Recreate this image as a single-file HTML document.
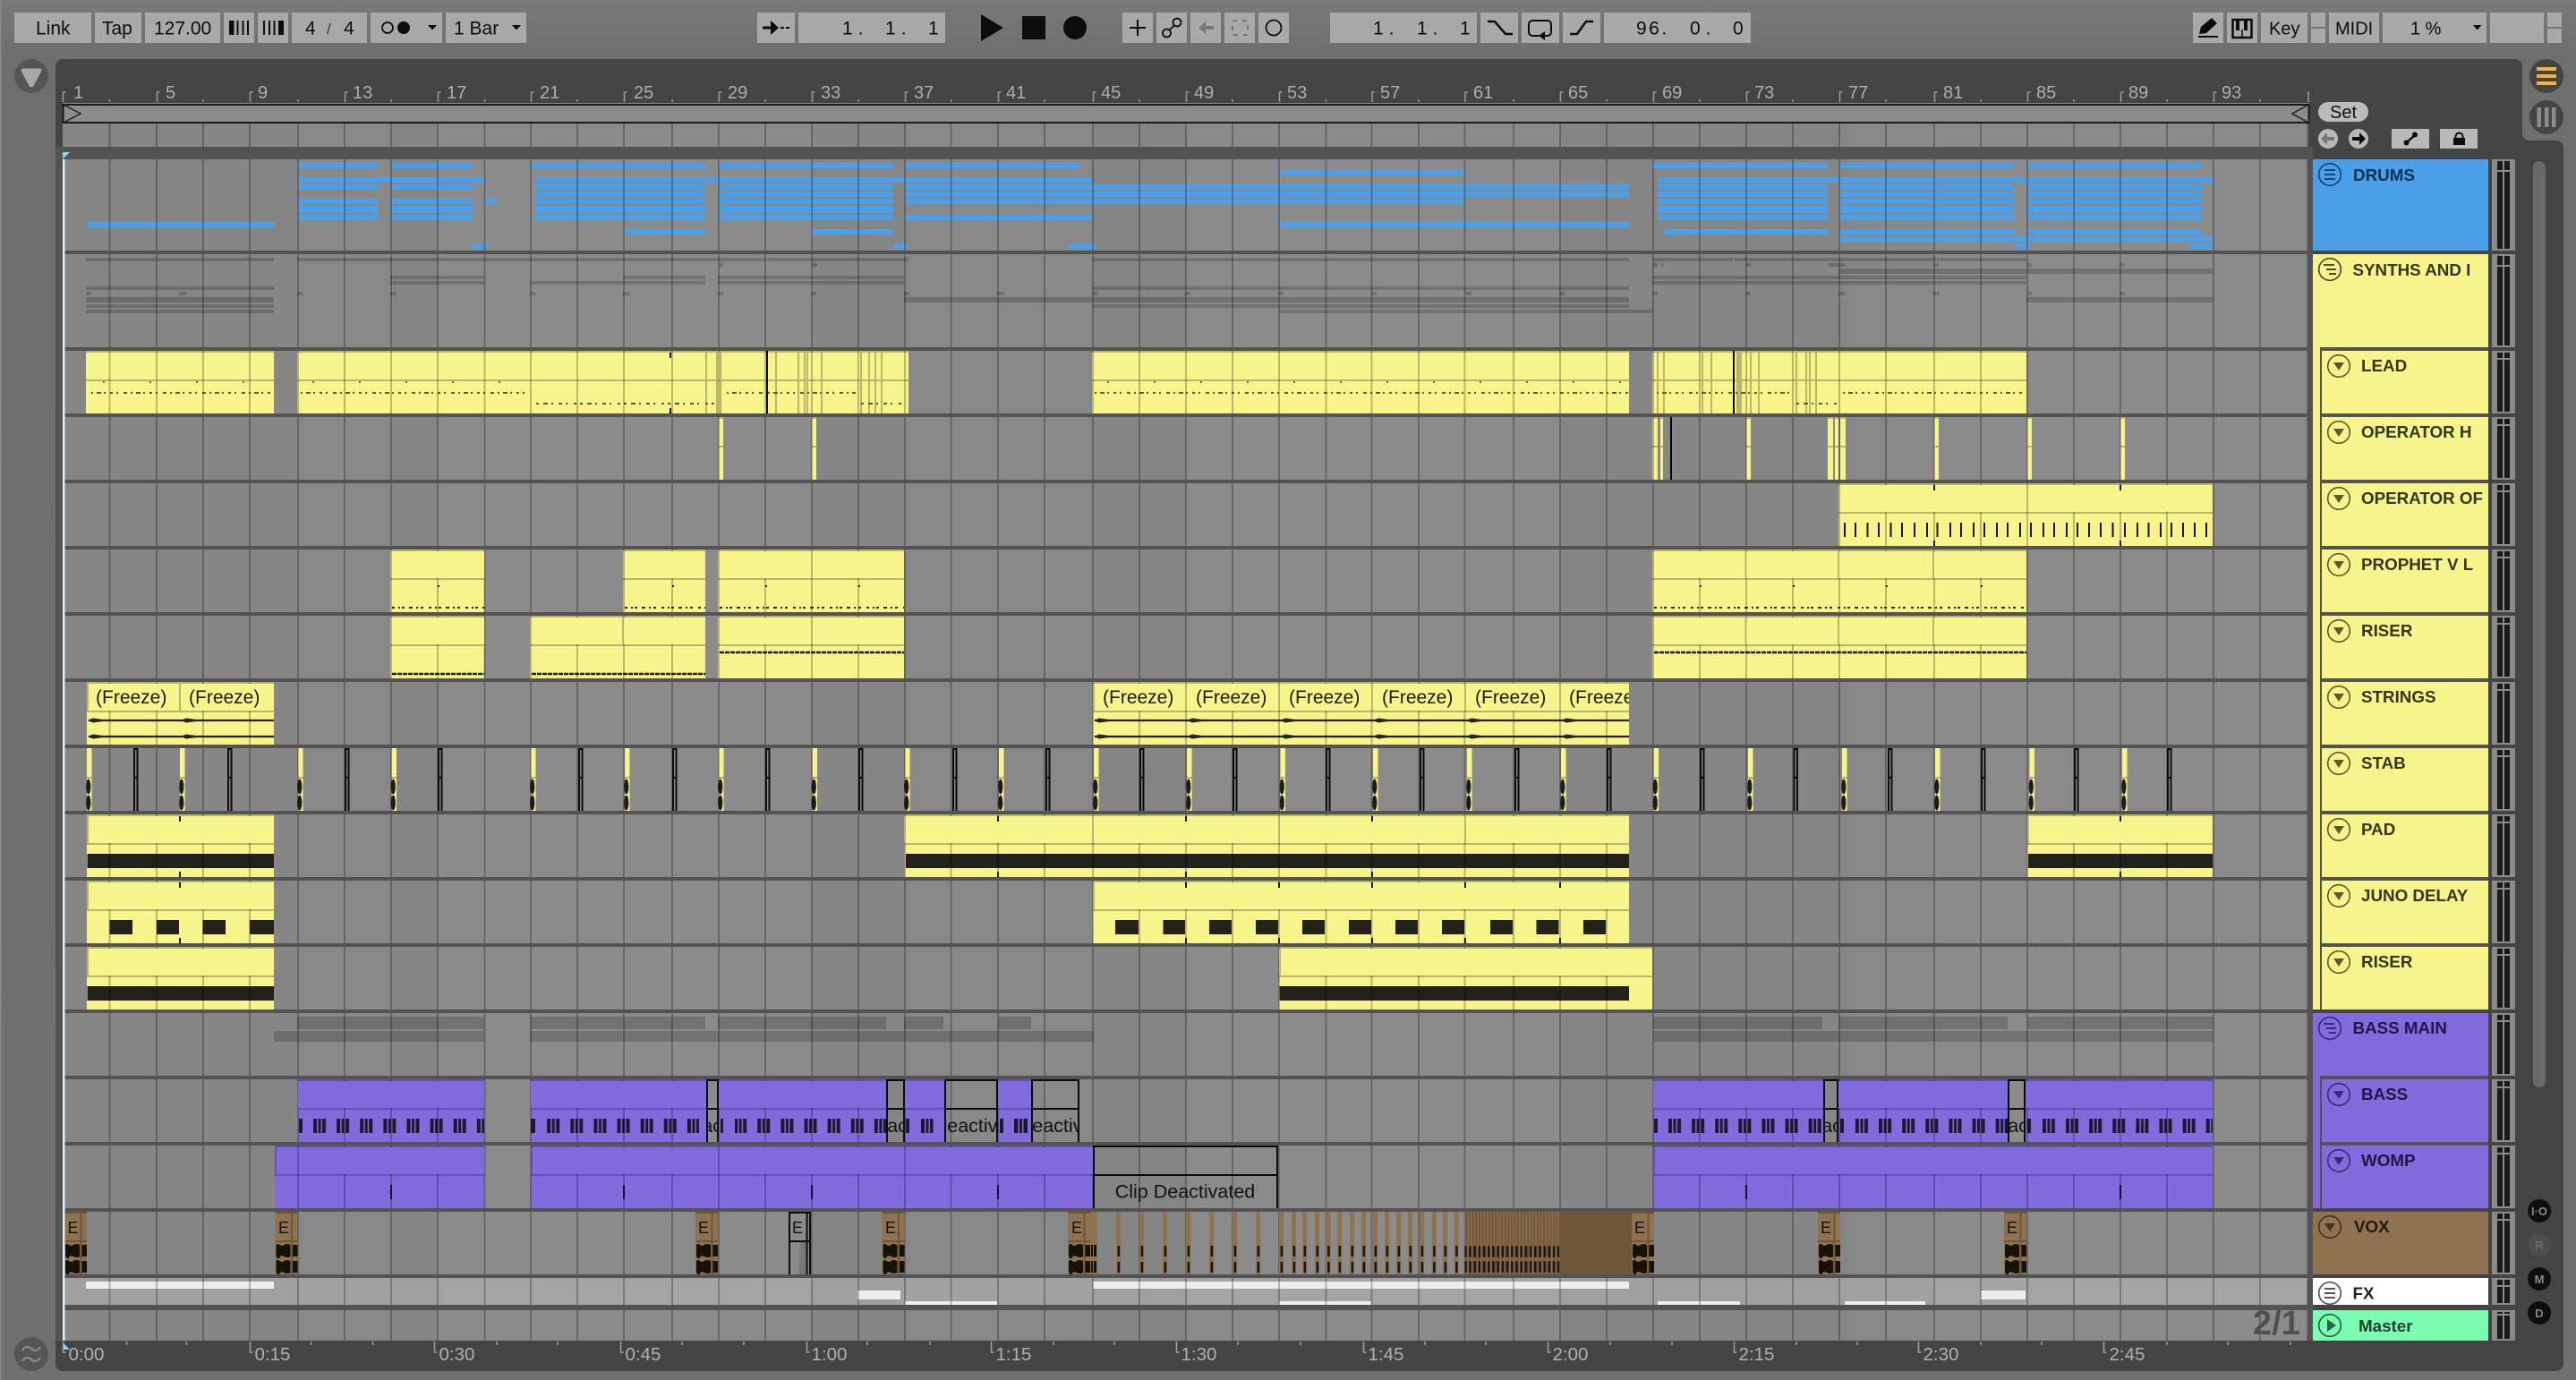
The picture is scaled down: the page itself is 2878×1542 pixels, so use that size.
<!DOCTYPE html>
<html lang="en">
<head>
<meta charset="utf-8">
<title>Arrangement View</title>
<style>
html,body{margin:0;padding:0;background:#707070;width:2878px;height:1542px;overflow:hidden}
svg{display:block}
text{font-family:"Liberation Sans",sans-serif}
.tb{font-size:21px;fill:#0c0c0c}
.ls{letter-spacing:6px}
.ls2{letter-spacing:2.5px}
.rl{font-size:20px;fill:#adadad}
.tl{font-size:20.5px;fill:#b0b0b0}
.nm{font-size:18.8px;font-weight:700}
.fz{font-size:21px;fill:#1a1a10}
.cd{font-size:21.5px;fill:#111}
.e{font-size:18px;fill:#111}
.sm{font-size:13px;font-weight:700;fill:#8a8a8a;text-anchor:middle}
</style>
</head>
<body>
<svg xmlns="http://www.w3.org/2000/svg" width="2878" height="1542" viewBox="0 0 2878 1542">
<defs>
<linearGradient id="bgg" x1="0" y1="0" x2="0" y2="1"><stop offset="0" stop-color="#7a7a7a"/><stop offset=".04" stop-color="#6e6e6e"/><stop offset="1" stop-color="#707070"/></linearGradient>
<pattern id="py" patternUnits="userSpaceOnUse" x="0" y="392" width="10" height="74"><rect width="10" height="70" fill="#f8f48c"/><rect width="10" height="2" fill="#b8b66a"/><rect y="32" width="10" height="2" fill="#b8b66a"/></pattern>
<pattern id="pp" patternUnits="userSpaceOnUse" x="0" y="392" width="10" height="74"><rect width="10" height="70" fill="#826bdc"/><rect width="10" height="2" fill="#6650b8"/><rect y="32" width="10" height="2" fill="#6650b8"/></pattern>
<pattern id="bn1" patternUnits="userSpaceOnUse" x="350" y="1250" width="26.12" height="16"><path fill="#1f1830" d="M0 0h4v16h-4zM5.5 0h3v16h-3zM10 0h4v16h-4z"/></pattern>
<pattern id="bn2" patternUnits="userSpaceOnUse" x="1864" y="1250" width="26.12" height="16"><path fill="#1f1830" d="M0 0h4v16h-4zM5.5 0h3v16h-3zM10 0h4v16h-4z"/></pattern>
<pattern id="dn" patternUnits="userSpaceOnUse" x="1636" y="1354" width="3.6" height="32"><rect width="1.6" height="32" fill="#947856"/></pattern>
<pattern id="dw" patternUnits="userSpaceOnUse" x="1636" y="1388" width="5.2" height="36"><rect x="0" y="4" width="2.6" height="13" rx="1.3" fill="#1c1710"/><rect x="0" y="21" width="2.6" height="13" rx="1.3" fill="#1c1710"/></pattern>
<path id="m" d="M2793 2V8M2801 2V8M2793 10V68M2801 10V68" fill="none" stroke="#1a1a1a" stroke-width="6"/>
<g id="tri"><circle cx="2613" cy="17" r="12.3" fill="none" stroke="currentColor" stroke-width="1.6"/><path d="M2607 13H2619L2613 22Z" fill="currentColor"/></g>
<g id="sy"><rect width="5.5" y="836" height="70" fill="#f8f48c"/><rect width="5.5" y="868" height="2" fill="#b8b66a"/><ellipse cx="1.8" cy="879" rx="2.6" ry="8.5" fill="#1c1c14"/><ellipse cx="1.8" cy="897" rx="2.6" ry="8.5" fill="#1c1c14"/></g>
<path id="sb" d="M1 836V906M4.5 836V906M0 869H5.5M0 837H5.5" fill="none" stroke="#0a0a0a" stroke-width="2"/>
<g id="vc"><rect width="25" y="1354" height="70" fill="#8f7250"/><path d="M0 1355H25M0 1387H25M18.5 1354V1424" stroke="#6f5638" stroke-width="2" fill="none"/><path d="M1 1391q2-2 4 0t5 0 7 0v13q-3 2-7 0t-5 1-4-1zM19.5 1391h5.5v13h-5.5zM1 1409q2-2 4 0t5 0 7 0v13q-3 2-7 0t-5 1-4-1zM19.5 1409h5.5v13h-5.5z" fill="#151209"/></g>
<g id="vt"><rect width="5.2" y="1354" height="70" fill="#8f7250"/><rect x="1.6" width="2.6" y="1392" height="12" fill="#1a1712"/><rect x="1.6" width="2.6" y="1410" height="12" fill="#1a1712"/></g>
</defs>

<rect width="2878" height="1542" fill="url(#bgg)"/>
<rect width="1.5" height="1542" fill="#8a8a8a"/>

<!-- Toolbar -->
<g fill="#a9a9a9">
<rect x="16" y="14" width="86" height="34"/><rect x="106" y="14" width="52" height="34"/><rect x="162" y="14" width="84" height="34"/><rect x="250" y="14" width="34" height="34"/><rect x="288" y="14" width="34" height="34"/><rect x="326" y="14" width="84" height="34"/><rect x="414" y="14" width="80" height="34"/><rect x="498" y="14" width="90" height="34"/>
<rect x="846" y="14" width="42" height="34"/><rect x="892" y="14" width="164" height="34"/>
<rect x="1254" y="14" width="34" height="34"/><rect x="1292" y="14" width="34" height="34"/><rect x="1330" y="14" width="34" height="34"/><rect x="1368" y="14" width="34" height="34"/><rect x="1406" y="14" width="34" height="34"/>
<rect x="1486" y="14" width="164" height="34"/><rect x="1654" y="14" width="42" height="34"/><rect x="1700" y="14" width="42" height="34"/><rect x="1746" y="14" width="42" height="34"/><rect x="1792" y="14" width="164" height="34"/>
<rect x="2450" y="14" width="34" height="34"/><rect x="2488" y="14" width="34" height="34"/><rect x="2526" y="14" width="52" height="34"/><rect x="2582" y="14" width="16" height="16"/><rect x="2582" y="32" width="16" height="16"/><rect x="2602" y="14" width="56" height="34"/><rect x="2662" y="14" width="116" height="34"/><rect x="2782" y="14" width="60" height="34"/><rect x="2846" y="14" width="16" height="16"/><rect x="2846" y="32" width="16" height="16"/>
</g>
<text class="tb" x="40" y="38.5">Link</text><text class="tb" x="114" y="38.5">Tap</text><text class="tb" x="172" y="38.5">127.00</text>
<path fill="#0c0c0c" d="M256 23h5.5v16h-5.5zM264.5 23h2v16h-2zM270.5 23h2v16h-2zM276 23h2v16h-2zM294 23h2v16h-2zM300 23h2v16h-2zM305.5 23h2v16h-2zM311 23h6v16h-6z"/>
<text class="tb" x="341" y="38.5">4</text><text class="tb" x="365" y="38" style="font-size:17px;fill:#333">/</text><text class="tb" x="384" y="38.5">4</text>
<circle cx="433" cy="31" r="6" fill="none" stroke="#0c0c0c" stroke-width="1.8"/><circle cx="451" cy="31" r="7" fill="#0c0c0c"/><path fill="#0c0c0c" d="M478 28h10l-5 5.5zM572 28h10l-5 5.5z"/>
<text class="tb" x="507" y="38.5">1 Bar</text>
<path fill="#0c0c0c" d="M852 29.5h9v-6.5l9 8-9 8v-6.5h-9zM872 30h4v2h-4zM878 30h4v2h-4z"/>
<text class="tb ls" x="941" y="38.5">1.</text><text class="tb ls" x="989" y="38.5">1.</text><text class="tb" x="1037" y="38.5">1</text>
<path fill="#0c0c0c" d="M1096 16L1121 31L1096 46zM1142 18h26v26h-26z"/><ellipse cx="1201" cy="31" rx="13" ry="13" fill="#0c0c0c"/>
<path d="M1271 22V40M1262 31H1280" stroke="#0c0c0c" stroke-width="2" fill="none"/>
<g fill="none" stroke="#0c0c0c" stroke-width="1.8"><circle cx="1303.5" cy="37" r="4.5"/><circle cx="1315" cy="25" r="4.5"/><path d="M1306.5 33.5L1312 28.5"/></g>
<path fill="#777" d="M1339 31l8-7v5h9v4h-9v5z"/>
<rect x="1377" y="23" width="17" height="16" fill="none" stroke="#777" stroke-width="2" stroke-dasharray="5 6"/>
<circle cx="1423" cy="31" r="8.5" fill="none" stroke="#0c0c0c" stroke-width="1.8"/>
<text class="tb ls" x="1534" y="38.5">1.</text><text class="tb ls" x="1583" y="38.5">1.</text><text class="tb" x="1631" y="38.5">1</text>
<path d="M1662 24H1670L1682 38H1690" fill="none" stroke="#0c0c0c" stroke-width="2.5"/>
<path d="M1720 40H1712a4 4 0 0 1-4-4V27a4 4 0 0 1 4-4H1729a4 4 0 0 1 4 4V36a4 4 0 0 1-4 4H1725" fill="none" stroke="#0c0c0c" stroke-width="2"/><path d="M1719 40l7-5v10z" fill="#0c0c0c"/>
<path d="M1754 38H1762L1772 24H1780" fill="none" stroke="#0c0c0c" stroke-width="2.5"/>
<text class="tb ls2" x="1828" y="38.5">96.</text><text class="tb ls" x="1888" y="38.5">0.</text><text class="tb" x="1936" y="38.5">0</text>
<path fill="#0c0c0c" d="M2456 40h22v2h-22zM2459 30l12-10 6 6-12 11-8 1z"/>
<rect x="2494.5" y="22" width="21" height="20" fill="none" stroke="#0c0c0c" stroke-width="2.5"/><path fill="#0c0c0c" d="M2498 22h4v12h-4zM2507 22h4v12h-4z"/><path d="M2505 33V42" stroke="#0c0c0c" stroke-width="1.5"/>
<text class="tb" x="2535" y="38.5" style="font-size:20px">Key</text><text class="tb" x="2609" y="38.5" style="font-size:20px">MIDI</text><text class="tb" x="2693" y="38.5" style="font-size:20px">1 %</text>
<path fill="#0c0c0c" d="M2763 28h9.5l-4.75 5.5z"/>

<!-- Side circles -->
<circle cx="35" cy="85" r="19" fill="#555"/><path d="M26 76.5H44Q47 76.5 46 80L37.5 96Q35 99 32.5 96L24 80Q23 76.5 26 76.5Z" fill="#a8a8a8"/>
<circle cx="35" cy="1513" r="19" fill="#555"/><path d="M25 1509c3-5 7-5 10-2s7 3 10-2M25 1521c3-5 7-5 10-2s7 3 10-2" stroke="#8e8e8e" stroke-width="2" fill="none"/>
<circle cx="2845" cy="85" r="19" fill="#444"/><path fill="#f3b13c" d="M2834 75h22v4h-22zM2834 83h22v4h-22zM2834 91h22v4h-22z"/>
<circle cx="2845" cy="131" r="19" fill="#444"/><path fill="#8c8c8c" d="M2834.5 120h4.5v22h-4.5zM2843 120h4.5v22h-4.5zM2851 120h4.5v22h-4.5z"/>

<!-- Main panel -->
<path fill="#444" d="M70 66H2810a8 8 0 0 1 8 8V149a8 8 0 0 0 8 8H2856a8 8 0 0 1 8 8V1524a8 8 0 0 1-8 8H70a8 8 0 0 1-8-8V74a8 8 0 0 1 8-8Z"/>

<!-- Bar ruler -->
<path d="M70.5 114V103h3M175.5 114V103h3M279.5 114V103h3M385.5 114V103h3M489.5 114V103h3M593.5 114V103h3M697.5 114V103h3M803.5 114V103h3M907.5 114V103h3M1011.5 114V103h3M1115.5 114V103h3M1221.5 114V103h3M1325.5 114V103h3M1429.5 114V103h3M1533 114V103h3M1637 114V103h3M1743.5 114V103h3M1847.5 114V103h3M1951.5 114V103h3M2055.5 114V103h3M2161.5 114V103h3M2265.5 114V103h3M2369.5 114V103h3M2473.5 114V103h3M2579 114V102M122.5 114V111M227 114V111M333 114V111M437 114V111M541.5 114V111M645 114V111M751 114V111M855 114V111M959 114V111M1062.5 114V111M1167 114V111M1273 114V111M1377 114V111M1481.5 114V111M1585 114V111M1691 114V111M1795 114V111M1899 114V111M2003 114V111M2107 114V111M2213 114V111M2317 114V111M2421 114V111M2525 114V111" stroke="#9a9a9a" stroke-width="1.5" fill="none"/>
<text class="rl" x="82" y="110">1</text><text class="rl" x="185" y="110">5</text><text class="rl" x="288" y="110">9</text><text class="rl" x="394" y="110">13</text><text class="rl" x="499" y="110">17</text><text class="rl" x="603" y="110">21</text><text class="rl" x="708" y="110">25</text><text class="rl" x="813" y="110">29</text><text class="rl" x="917" y="110">33</text><text class="rl" x="1021" y="110">37</text><text class="rl" x="1124" y="110">41</text><text class="rl" x="1230" y="110">45</text><text class="rl" x="1334" y="110">49</text><text class="rl" x="1438" y="110">53</text><text class="rl" x="1542" y="110">57</text><text class="rl" x="1646" y="110">61</text><text class="rl" x="1752" y="110">65</text><text class="rl" x="1857" y="110">69</text><text class="rl" x="1960" y="110">73</text><text class="rl" x="2065" y="110">77</text><text class="rl" x="2171" y="110">81</text><text class="rl" x="2275" y="110">85</text><text class="rl" x="2378" y="110">89</text><text class="rl" x="2482" y="110">93</text>

<!-- Scrub strip -->
<rect x="70" y="115" width="2510" height="23" fill="#8c8c8c"/><path d="M70 117H2580M70 137H2580M2579.5 116V138M70.5 116V138" stroke="#1a1a1a" stroke-width="2" fill="none"/>
<path d="M71 117L90 127L71 137" stroke="#222" stroke-width="1.5" fill="none"/><path d="M2579 117L2561 127L2579 137" stroke="#222" stroke-width="1.5" fill="none"/>

<!-- Grid background bands -->
<rect x="70" y="138" width="2509" height="1360" fill="#8b8b8b"/>
<g fill="#868686"><rect x="70" y="138" width="263" height="1360"/><rect x="907" y="138" width="104" height="1360"/><rect x="1011" y="138" width="210" height="1360" fill="#888"/><rect x="333" y="138" width="104" height="1360" fill="#888"/><rect x="437" y="138" width="52" height="1360" fill="#858585"/><rect x="1221" y="138" width="104" height="1360" fill="#858585"/><rect x="1743" y="138" width="322" height="1360" fill="#868686"/><rect x="2065" y="138" width="96" height="1360" fill="#888"/></g>
<rect x="70" y="1428" width="2509" height="30" fill="#fff" fill-opacity=".22"/>

<!-- Drum notes -->
<g fill="none" stroke="#4a9fe8">
<path stroke-width="6" d="M333 185H422M437 185H528M593 185H788M803 185H998M1011 185H1206M1846 185H2042M2055 185H2250M2265 185H2460
M1429 193H1636
M333 201H541M598 201H1220M1852 201H2472
M333 209H422M437 209H528M598 209H788M803 209H998M1011 209H1820M1852 209H2042M2055 209H2250M2265 209H2460
M598 217H788M803 217H998M1011 217H1820M1852 217H2042M2055 217H2250M2265 217H2460
M333 225H422M437 225H528M541 225H555M598 225H788M803 225H998M1011 225H1636M1852 225H2042M2055 225H2250M2265 225H2460
M333 243H422M437 243H528M598 243H788M803 243H998M1011 243H1220M1425 243H1428M1634 243H1636M1852 243H2042M2055 243H2250M2265 243H2460
M97 251H306M1429 251H1820
M697 259H788M907 259H998M1858 259H2042M2055 259H2250M2265 259H2460
M2055 267H2472
M528 275H544M999 275H1013M1193 275H1224M2250 275H2268M2446 275H2472"/>
<path stroke-width="8" d="M333 234H422M437 234H528M598 234H788M803 234H998M1852 234H2042M2055 234H2250M2265 234H2460"/>
</g>

<!-- Group mini bars -->
<g fill="none" stroke="#000" stroke-opacity=".18">
<path stroke-width="4" d="M96 290H306M332 290H856M857 290H1015M1220 290H1820M1846 290H1936M1938 290H2264
M803 296H808M907 296H913M1846 296H1852M1856 296H1858M1950 296H1956M2042 296H2062M2160 296H2166M2265 296H2270M2368 296H2374
M436 310H541M696 310H788M802 310H1010M1846 310H2264
M436 316H541M592 316H788M802 316H1010M1846 316H2264
M96 322H306M1220 322H1820
M96 328H102M200 328H208M332 328H338M436 328H442M592 328H598M696 328H704M802 328H808M906 328H912M1010 328H1016M1114 328H1122M1220 328H1226M1324 328H1330M1428 328H1434M1532 328H1538M1637 328H1644M1742 328H1748M1846 328H1852M1950 328H1956M2054 328H2062M2160 328H2166M2265 328H2270M2368 328H2374
M96 342H306M1220 342H1820
M96 348H306M1429 348H1846"/>
<path stroke-width="6" d="M2054 303H2472M96 335H306M1010 335H1820M2264 335H2472"/>
<path stroke-width="14" d="M332 1143H541M592.5 1143H788M802 1143H990M1010 1143H1054M1115 1143H1152M1847 1143H2036M2054 1143H2243M2265 1143H2473"/>
<path stroke-width="12" d="M306 1158H541M592 1158H1222M1847 1158H2473"/>
</g>

<!-- Yellow clip bodies -->
<g fill="none" stroke="url(#py)" stroke-width="70">
<path d="M96 427H306M332 427H856M858 427H1015M1220 427H1820M1846 427H1936M1938 427H2264"/>
<path d="M803 501H808M907 501H912M1846 501H1852M1855 501H1858M1951 501H1956M2042 501H2048M2050 501H2054M2056 501H2062M2161 501H2166M2265 501H2270M2369 501H2374"/>
<path d="M2054 575H2472"/>
<path d="M436 649H541M696 649H788M802 649H1010M1846 649H2264"/>
<path d="M436 723H541M592 723H788M802 723H1010M1846 723H2264"/>
<path d="M97 797H306M1221 797H1820"/>
<path d="M97 945H306M1010.5 945H1820M2265 945H2472"/>
<path d="M97 1019H306M1221 1019H1820"/>
<path d="M97 1093H306M1429 1093H1846"/>
</g>
<!-- Purple clip bodies -->
<g fill="none" stroke="url(#pp)" stroke-width="70">
<path d="M333 1241H541M593 1241H789M803 1241H990M1011 1241H1055M1115 1241H1152M1847 1241H2037M2054 1241H2243M2263 1241H2472"/>
<path d="M307 1315H541M593 1315H1221M1847 1315H2472"/>
</g>

<!-- Lead notes + internal lines -->
<path d="M789 394V462M801 394V462M805 394V462M867 394V462M892 394V462M899 394V462M902 394V462M918 394V462M962 394V462M971 394V462M978 394V462M985 394V462M1852 394V462M1859 394V462M1902 394V462M1912 394V462M1956 394V462M1965 394V462M2007 394V462M2018 394V462M2022 394V462M2029 394V462" stroke="#b8b66a" stroke-width="2" fill="none"/>
<rect x="1940" y="394" width="6" height="68" fill="#b8b66a"/>
<path d="M102 439H306M336 439H592M812 439H854M858 439H956M1223 439H1820M1851 439H2000M2059 439H2261" stroke="#5a5a3a" stroke-width="2" stroke-dasharray="2 4 5 3 2 5 3 4 2 6 4 4" fill="none"/>
<path d="M599 451H800M962 451H1010M2007 451H2053" stroke="#5a5a3a" stroke-width="2" stroke-dasharray="3 5 5 4 2 6 4 4 2 7 3 4" fill="none"/>
<path d="M115 427H306M349 427H592M1237 427H1820" stroke="#6e6e48" stroke-width="2" stroke-dasharray="2 50" fill="none"/>
<!-- Prophet notes -->
<path d="M438 679H541M698 679H788M804 679H1010M1848 679H2264" stroke="#26261a" stroke-width="2" stroke-dasharray="3 4 2 2 3 5 4 4 2 3 3 6" fill="none"/>
<path d="M489 655h2M751 655h2M855 655h2M959 655h2M1899 655h2M2003 655h2M2107 655h2M2213 655h2" stroke="#1c1c12" stroke-width="2" fill="none"/>
<!-- Riser notes -->
<path d="M438 753H541M594 753H788M804 729H1010M1848 729H2264" stroke="#1c1c12" stroke-width="2.5" stroke-dasharray="5 1" fill="none"/>
<!-- OP OF notes -->
<path d="M2061 584V600M2073 584V600M2086.5 584V600M2099 584V600M2112.5 584V600M2125 584V600M2139 584V600M2153 584V600M2164.5 584V600M2179 584V600M2191 584V600M2205 584V600M2217 584V600M2231 584V600M2243 584V600M2257 584V600M2269 584V600M2283 584V600M2295 584V600M2309 584V600M2321 584V600M2334 584V600M2347 584V600M2360.5 584V600M2374 584V600M2388 584V600M2400.5 584V600M2414 584V600M2426 584V600M2439 584V600M2452 584V600M2465 584V600" stroke="#16160e" stroke-width="2" fill="none"/>
<!-- Strings -->
<path d="M99 805H306M1223 805H1820M99 823H306M1223 823H1820" stroke="#222218" stroke-width="2.2" fill="none"/>
<path fill="#222218" d="M98 805l6-2.5 18 2.5-18 2.5zM202 805l6-2.5 18 2.5-18 2.5zM98 823l6-2.5 18 2.5-18 2.5zM202 823l6-2.5 18 2.5-18 2.5zM1222 805l6-2.5 18 2.5-18 2.5zM1326 805l6-2.5 18 2.5-18 2.5zM1430 805l6-2.5 18 2.5-18 2.5zM1534 805l6-2.5 18 2.5-18 2.5zM1638 805l6-2.5 18 2.5-18 2.5zM1744 805l6-2.5 18 2.5-18 2.5zM1222 823l6-2.5 18 2.5-18 2.5zM1326 823l6-2.5 18 2.5-18 2.5zM1430 823l6-2.5 18 2.5-18 2.5zM1534 823l6-2.5 18 2.5-18 2.5zM1638 823l6-2.5 18 2.5-18 2.5zM1744 823l6-2.5 18 2.5-18 2.5z"/>
<!-- Stab -->
<use href="#sy" x="97"/><use href="#sy" x="201"/><use href="#sy" x="333"/><use href="#sy" x="437.5"/><use href="#sy" x="593"/><use href="#sy" x="698"/><use href="#sy" x="803"/><use href="#sy" x="907.5"/><use href="#sy" x="1011"/><use href="#sy" x="1116"/><use href="#sy" x="1222"/><use href="#sy" x="1326"/><use href="#sy" x="1430.5"/><use href="#sy" x="1534"/><use href="#sy" x="1639"/><use href="#sy" x="1744"/><use href="#sy" x="1847.5"/><use href="#sy" x="1953"/><use href="#sy" x="2058"/><use href="#sy" x="2162"/><use href="#sy" x="2267.5"/><use href="#sy" x="2371"/>
<!-- Pad / Juno / Riser blocks -->
<path fill="#22211a" d="M97.5 954H306V970H97.5zM1012 954H1820V970H1012zM2266 954H2472V970H2266zM97.5 1102H306V1118H97.5zM1429.5 1102H1820V1118H1429.5zM122.5 1028H148V1044H122.5zM175 1028H200V1044H175zM226.5 1028H252V1044H226.5zM279 1028H306V1044H279zM1246 1028H1272V1044H1246zM1299.5 1028H1324V1044H1299.5zM1351 1028H1376V1044H1351zM1403 1028H1428V1044H1403zM1455 1028H1480V1044H1455zM1507 1028H1532V1044H1507zM1559 1028H1584V1044H1559zM1611 1028H1636V1044H1611zM1665 1028H1690V1044H1665zM1716.5 1028H1741.5V1044H1716.5zM1769 1028H1794V1044H1769z"/>
<!-- Bass notes -->
<rect x="350" y="1250" width="191" height="16" fill="url(#bn1)"/><rect x="334" y="1250" width="4" height="16" fill="#1f1830"/>
<rect x="610" y="1250" width="171" height="16" fill="url(#bn1)"/><rect x="593" y="1250" width="5" height="16" fill="#1f1830"/>
<rect x="821" y="1250" width="169" height="16" fill="url(#bn1)"/><rect x="805" y="1250" width="3" height="16" fill="#1f1830"/>
<path fill="#1f1830" d="M1012 1250h4v16h-4zM1029 1250h4v16h-4zM1034.5 1250h3v16h-3zM1039 1250h3.5v16h-3.5zM1117 1250h4v16h-4zM1133 1250h4.5v16h-4.5zM1139 1250h3v16h-3zM1143.5 1250h4.5v16h-4.5z"/>
<rect x="1864" y="1250" width="173" height="16" fill="url(#bn2)"/><rect x="1848" y="1250" width="4" height="16" fill="#1f1830"/>
<rect x="2072" y="1250" width="171" height="16" fill="url(#bn2)"/><rect x="2056" y="1250" width="4" height="16" fill="#1f1830"/>
<rect x="2282" y="1250" width="190" height="16" fill="url(#bn2)"/><rect x="2265" y="1250" width="4" height="16" fill="#1f1830"/>
<path d="M437 1324V1340M697 1324V1340M907 1324V1340M1115 1324V1340M1951 1324V1340M2369 1324V1340" stroke="#1f1830" stroke-width="2" fill="none"/>
<!-- FX clips -->
<path fill="#ededed" d="M96 1432H306V1440H96zM1221 1432H1820V1440H1221zM958 1442H1006V1452H958zM2213 1442H2263V1452H2213zM1011 1454H1114V1458H1011zM1429 1454H1532V1458H1429zM1852 1454H1944V1458H1852zM2061 1454H2151V1458H2061z"/>

<!-- Grid lines overlay -->
<path stroke="#000" stroke-opacity=".25" stroke-width="2" fill="none" d="M122.5 138V1498M175 138V1498M227 138V1498M279 138V1498M333 138V1498M385 138V1498M437 138V1498M489 138V1498M541.5 138V1498M593 138V1498M645 138V1498M697 138V1498M751 138V1498M803 138V1498M855 138V1498M907 138V1498M959 138V1498M1011 138V1498M1062.5 138V1498M1115 138V1498M1167 138V1498M1221 138V1498M1273 138V1498M1325 138V1498M1377 138V1498M1429 138V1498M1481.5 138V1498M1532.5 138V1498M1585 138V1498M1636.5 138V1498M1691 138V1498M1743 138V1498M1795 138V1498M1847 138V1498M1899 138V1498M1951 138V1498M2003 138V1498M2055 138V1498M2107 138V1498M2161 138V1498M2213 138V1498M2265 138V1498M2317 138V1498M2369 138V1498M2421 138V1498M2473 138V1498M2525 138V1498M2578 138V1498"/>

<!-- Clip header pass: clean tops -->
<g fill="none" stroke="#f8f48c" stroke-width="30">
<path d="M2056 557H2472"/>
<path d="M438 631H541M698 631H788M804 631H1010M1848 631H2264"/>
<path d="M438 705H541M594 705H788M804 705H1010M1848 705H2264"/>
<path d="M99 779H306M1223 779H1820"/>
<path d="M99 927H306M1012 927H1820M2267 927H2472"/>
<path d="M99 1001H306M1223 1001H1820"/>
<path d="M99 1075H306M1431 1075H1846"/>
</g>
<path fill="none" stroke="#826bdc" stroke-width="30" d="M333 1223H541M593 1223H789M803 1223H990M1011 1223H1055M1115 1223H1152M1847 1223H2037M2054 1223H2243M2263 1223H2472M309 1297H541M595 1297H1221M1849 1297H2472"/>
<path fill="none" stroke="#b8b66a" stroke-width="2" d="M2265 542V572M2055 542V572M907 616V646M1950.5 616V646M2054 616V646M2160 616V646M437 616V646M697 616V646M803 616V646M1847 616V646M696 690V720M907 690V720M1950.5 690V720M2054 690V720M2160 690V720M437 690V720M593 690V720M803 690V720M1847 690V720M98 764V794M201 764V794M1325 764V794M1429 764V794M1533 764V794M1637 764V794M1743 764V794M1222 764V794M1221 912V942M1429 912V942M1637 912V942M98 912V942M1011 912V942M2266 912V942M98 986V1016M1222 986V1016M98 1060V1090M1430 1060V1090"/>
<path fill="none" stroke="#6650b8" stroke-width="2" d="M333 1282V1312M803 1282V1312M1011 1282V1312M308 1282V1312M594 1282V1312M1848 1282V1312"/>
<!-- small ticks -->
<path fill="none" stroke="#1a1a10" stroke-width="2" d="M749 394V400M749 456V462M2161 542V548M2369 542V548M2161 604V610M2369 604V610M201 912V918M201 974V980M1115 912V918M1325 912V918M1533 912V918M2369 912V918M1115 974V980M1325 974V980M1533 974V980M2369 974V980M201 986V992M201 1048V1054M1325 986V992M1429 986V992M1533 986V992M1637 986V992M1743 986V992M1325 1048V1054M1429 1048V1054M1533 1048V1054M1637 1048V1054M1743 1048V1054"/>

<!-- Thick black lines / deactivated -->
<path fill="none" stroke="#050505" stroke-width="2" d="M857 392V462M1867 466V536M1937 392V462"/>
<use href="#sb" x="149"/><use href="#sb" x="254"/><use href="#sb" x="385"/><use href="#sb" x="489"/><use href="#sb" x="646"/><use href="#sb" x="751"/><use href="#sb" x="855"/><use href="#sb" x="959"/><use href="#sb" x="1064"/><use href="#sb" x="1168"/><use href="#sb" x="1273"/><use href="#sb" x="1377"/><use href="#sb" x="1481"/><use href="#sb" x="1586"/><use href="#sb" x="1692"/><use href="#sb" x="1795"/><use href="#sb" x="1899"/><use href="#sb" x="2003.5"/><use href="#sb" x="2109"/><use href="#sb" x="2213"/><use href="#sb" x="2317"/><use href="#sb" x="2421"/>
<path fill="none" stroke="#0a0a0a" stroke-width="2" d="M790 1276V1207H802V1276M790 1239H802M991 1276V1207H1010V1276M991 1239H1010M1056 1276V1207H1114V1276M1056 1239H1114M1153 1276V1207H1205V1276M1153 1239H1205M2038 1276V1207H2053V1276M2038 1239H2053M2244 1276V1207H2262V1276M2244 1239H2262M1222 1350V1281H1427V1350M1222 1313H1427"/>
<svg x="791" y="1241" width="10" height="35"><text class="cd" x="1" y="24" text-anchor="middle">Clip Deactivated</text></svg>
<svg x="992" y="1241" width="18" height="35"><text class="cd" x="7" y="24" text-anchor="middle">Clip Deactivated</text></svg>
<svg x="1057" y="1241" width="57" height="35"><text class="cd" x="21" y="24" text-anchor="middle">Clip Deactivated</text></svg>
<svg x="1154" y="1241" width="50" height="35"><text class="cd" x="19" y="24" text-anchor="middle">Clip Deactivated</text></svg>
<svg x="2039" y="1241" width="14" height="35"><text class="cd" x="4" y="24" text-anchor="middle">Clip Deactivated</text></svg>
<svg x="2245" y="1241" width="16" height="35"><text class="cd" x="6" y="24" text-anchor="middle">Clip Deactivated</text></svg>
<text class="cd" x="1324" y="1338.5" text-anchor="middle">Clip Deactivated</text>

<!-- Freeze labels -->
<text class="fz" x="107" y="786">(Freeze)</text><text class="fz" x="211" y="786">(Freeze)</text>
<text class="fz" x="1232" y="786">(Freeze)</text><text class="fz" x="1336" y="786">(Freeze)</text><text class="fz" x="1440" y="786">(Freeze)</text><text class="fz" x="1544" y="786">(Freeze)</text><text class="fz" x="1648" y="786">(Freeze)</text>
<svg x="1744" y="764" width="76" height="30"><text class="fz" x="9" y="22">(Freeze)</text></svg>

<!-- Vox clips -->
<use href="#vc" x="72"/><use href="#vc" x="307.5"/><use href="#vc" x="777"/><use href="#vc" x="985.5"/><use href="#vc" x="1193"/><use href="#vc" x="1823"/><use href="#vc" x="2031"/><use href="#vc" x="2239"/>
<rect x="1218" y="1354" width="8" height="70" fill="#8f7250"/><path d="M1219 1391h2v13h-2zM1222 1391h3v13h-3zM1219 1409h2v13h-2zM1222 1409h3v13h-3z" fill="#151209"/>
<use href="#vt" x="1247"/><use href="#vt" x="1273"/><use href="#vt" x="1299"/><use href="#vt" x="1325"/><use href="#vt" x="1351"/><use href="#vt" x="1377"/><use href="#vt" x="1403"/><use href="#vt" x="1429"/><use href="#vt" x="1443"/><use href="#vt" x="1455"/><use href="#vt" x="1469"/><use href="#vt" x="1481.5"/><use href="#vt" x="1494"/><use href="#vt" x="1508"/><use href="#vt" x="1521"/><use href="#vt" x="1534"/><use href="#vt" x="1547"/><use href="#vt" x="1560"/><use href="#vt" x="1573"/><use href="#vt" x="1586"/><use href="#vt" x="1599.5"/><use href="#vt" x="1612"/><use href="#vt" x="1624.5"/>
<rect x="1636.5" y="1354" width="186.5" height="70" fill="#6f5638"/>
<rect x="1636.5" y="1354" width="105.5" height="70" fill="url(#dn)" opacity=".75"/>
<rect x="1636.5" y="1388" width="105.5" height="36" fill="url(#dw)"/>
<text class="e" x="75.5" y="1378">E</text><text class="e" x="311" y="1378">E</text><text class="e" x="780" y="1378">E</text><text class="e" x="989" y="1378">E</text><text class="e" x="1197" y="1378">E</text><text class="e" x="1826" y="1378">E</text><text class="e" x="2034" y="1378">E</text><text class="e" x="2242" y="1378">E</text>
<path fill="none" stroke="#0a0a0a" stroke-width="2" d="M882 1424V1355H905V1424M882 1387H905M901.5 1355V1424"/><path d="M894 1388h6v36h-8z" fill="#6e6e6e" opacity=".6"/>
<text class="e" x="885" y="1378">E</text>

<!-- Row separators -->
<path fill="#535353" d="M62 280H2584V284H62zM62 388H2584V392H62zM62 462H2584V466H62zM62 536H2584V540H62zM62 610H2584V614H62zM62 684H2584V688H62zM62 758H2584V762H62zM62 832H2584V836H62zM62 906H2584V910H62zM62 980H2584V984H62zM62 1054H2584V1058H62zM62 1128H2584V1132H62zM62 1202H2584V1206H62zM62 1276H2584V1280H62zM62 1350H2584V1354H62zM62 1424H2584V1428H62zM62 1458H2584V1464H62zM62 164H2584V178H62zM62 178H70V1498H62zM2578 178H2584V1498H2578z"/>
<rect x="70" y="1498" width="2510" height="2" fill="#444"/>

<!-- Playhead -->
<rect x="70" y="178" width="2.5" height="1320" fill="#d9eef5"/>
<path fill="#7ddcf2" d="M70 170H78L70 178zM70 1500L78 1508H70z"/>

<!-- 2/1 -->
<text x="2517" y="1491" style="font-size:38px;font-weight:700;fill:#505050">2/1</text>

<!-- Time ruler -->
<path fill="none" stroke="#a0a0a0" stroke-width="1.5" d="M70.5 1499V1511h3M279.5 1499V1511h3M485.5 1499V1511h3M693.5 1499V1511h3M901.5 1499V1511h3M1107.5 1499V1511h3M1314.5 1499V1511h3M1523.5 1499V1511h3M1729.5 1499V1511h3M1937.5 1499V1511h3M2143.5 1499V1511h3M2350.5 1499V1511h3M141.5 1499V1503M208.5 1499V1503M347.5 1499V1503M416.5 1499V1503M555 1499V1503M623 1499V1503M762 1499V1503M831 1499V1503M969 1499V1503M1039 1499V1503M1177 1499V1503M1245 1499V1503M1383 1499V1503M1453 1499V1503M1592 1499V1503M1660 1499V1503M1799 1499V1503M1868 1499V1503M2007 1499V1503M2075 1499V1503M2213 1499V1503M2281 1499V1503M2421 1499V1503M2489 1499V1503M2559 1499V1503"/>
<text class="tl" x="76.5" y="1520">0:00</text><text class="tl" x="284.5" y="1520">0:15</text><text class="tl" x="490.5" y="1520">0:30</text><text class="tl" x="698.5" y="1520">0:45</text><text class="tl" x="906.5" y="1520">1:00</text><text class="tl" x="1112.5" y="1520">1:15</text><text class="tl" x="1319.5" y="1520">1:30</text><text class="tl" x="1528.5" y="1520">1:45</text><text class="tl" x="1734.5" y="1520">2:00</text><text class="tl" x="1942.5" y="1520">2:15</text><text class="tl" x="2148.5" y="1520">2:30</text><text class="tl" x="2356.5" y="1520">2:45</text>

<!-- Set controls -->
<rect x="2590" y="114" width="56" height="22" rx="11" fill="#bcbcbc"/><text x="2618" y="132" text-anchor="middle" style="font-size:20px;fill:#111">Set</text>
<circle cx="2601" cy="155" r="11" fill="#b8b8b8"/><path fill="#787878" d="M2593 155l7-7v5h8v4h-8v5z"/>
<circle cx="2635" cy="155" r="11" fill="#b8b8b8"/><path fill="#0c0c0c" d="M2643 155l-7-7v5h-8v4h8v5z"/>
<rect x="2672" y="144" width="42" height="22" fill="#b8b8b8"/><path d="M2689 159L2698 151" stroke="#0c0c0c" stroke-width="2.5"/><circle cx="2688.5" cy="159.5" r="3" fill="#0c0c0c"/><circle cx="2698" cy="150.5" r="3" fill="#0c0c0c"/>
<rect x="2726" y="144" width="42" height="22" fill="#b8b8b8"/><rect x="2741" y="154" width="13" height="8" fill="#0c0c0c"/><path d="M2743.5 155V152.5a4 4 0 0 1 8 0V155" fill="none" stroke="#0c0c0c" stroke-width="2"/>

<!-- Track headers -->
<rect x="2584" y="178" width="196" height="102" fill="#4a9fe8"/>
<rect x="2584" y="284" width="196" height="844" fill="#f8f48c"/>
<rect x="2584" y="1132" width="196" height="218" fill="#826bdc"/>
<rect x="2584" y="1354" width="196" height="70" fill="#8f7250"/>
<rect x="2584" y="1428" width="196" height="30" fill="#fff"/>
<rect x="2584" y="1464" width="196" height="34" fill="#7bfcb0"/>
<path fill="#535353" d="M2592 388H2780V392H2592zM2592 462H2780V466H2592zM2592 536H2780V540H2592zM2592 610H2780V614H2592zM2592 684H2780V688H2592zM2592 758H2780V762H2592zM2592 832H2780V836H2592zM2592 906H2780V910H2592zM2592 980H2780V984H2592zM2592 1054H2780V1058H2592zM2592 1202H2780V1206H2592zM2592 1276H2780V1280H2592zM2592 388H2594V1128H2592zM2592 1202H2594V1350H2592z"/>

<!-- Meters -->
<path fill="#8a8a8a" d="M2784 178H2810V280H2784zM2784 284H2810V388H2784zM2784 392H2810V462H2784zM2784 466H2810V536H2784zM2784 540H2810V610H2784zM2784 614H2810V684H2784zM2784 688H2810V758H2784zM2784 762H2810V832H2784zM2784 836H2810V906H2784zM2784 910H2810V980H2784zM2784 984H2810V1054H2784zM2784 1058H2810V1128H2784zM2784 1132H2810V1202H2784zM2784 1206H2810V1276H2784zM2784 1280H2810V1350H2784zM2784 1354H2810V1424H2784zM2784 1428H2810V1458H2784zM2784 1464H2810V1498H2784z"/>
<use href="#m" y="392"/><use href="#m" y="466"/><use href="#m" y="540"/><use href="#m" y="614"/><use href="#m" y="688"/><use href="#m" y="762"/><use href="#m" y="836"/><use href="#m" y="910"/><use href="#m" y="984"/><use href="#m" y="1058"/><use href="#m" y="1132"/><use href="#m" y="1206"/><use href="#m" y="1280"/><use href="#m" y="1354"/>
<path fill="none" stroke="#1a1a1a" stroke-width="6" d="M2793 180V190M2801 180V190M2793 192V278M2801 192V278M2793 286V296M2801 286V296M2793 298V386M2801 298V386M2793 1430V1436M2801 1430V1436M2793 1438V1456M2801 1438V1456M2793 1466V1468M2801 1466V1468M2793 1470V1496M2801 1470V1496"/>

<!-- Group icons -->
<g fill="none" stroke-width="1.7">
<circle cx="2603" cy="195" r="12.3" stroke="#17466e"/><path d="M2597 190H2609M2597 195H2609M2597 200H2609" stroke="#17466e" stroke-width="2"/>
<circle cx="2603" cy="301" r="12.3" stroke="#4a4a2c"/><path d="M2596 296H2608M2599 301H2610M2602 306H2610" stroke="#4a4a2c" stroke-width="2"/>
<circle cx="2603" cy="1149" r="12.3" stroke="#3a2c78"/><path d="M2596 1144H2608M2599 1149H2610M2602 1154H2610" stroke="#3a2c78" stroke-width="2"/>
<circle cx="2603" cy="1445" r="12.3" stroke="#555"/><path d="M2597 1440H2609M2597 1445H2609M2597 1450H2609" stroke="#555" stroke-width="2"/>
<circle cx="2603" cy="1481" r="12.3" stroke="#27624a"/>
</g>
<path fill="#27624a" d="M2600 1474L2610 1481L2600 1488Z"/>
<g color="#5c5a30"><use href="#tri" y="392"/><use href="#tri" y="466"/><use href="#tri" y="540"/><use href="#tri" y="614"/><use href="#tri" y="688"/><use href="#tri" y="762"/><use href="#tri" y="836"/><use href="#tri" y="910"/><use href="#tri" y="984"/><use href="#tri" y="1058"/></g>
<g color="#3a2c78"><use href="#tri" y="1206"/><use href="#tri" y="1280"/></g>
<g color="#45341f"><use href="#tri" x="-10" y="1354"/></g>

<!-- Track names -->
<text class="nm" x="2629" y="202" fill="#0f3252">DRUMS</text>
<text class="nm" x="2628.5" y="308" fill="#36361f">SYNTHS AND I</text>
<text class="nm" x="2638" y="415" fill="#36361f">LEAD</text>
<text class="nm" x="2638" y="489" fill="#36361f">OPERATOR H</text>
<text class="nm" x="2638" y="563" fill="#36361f">OPERATOR OF</text>
<text class="nm" x="2638" y="637" fill="#36361f">PROPHET V L</text>
<text class="nm" x="2638" y="711" fill="#36361f">RISER</text>
<text class="nm" x="2638" y="785" fill="#36361f">STRINGS</text>
<text class="nm" x="2638" y="859" fill="#36361f">STAB</text>
<text class="nm" x="2638" y="933" fill="#36361f">PAD</text>
<text class="nm" x="2638" y="1007" fill="#36361f">JUNO DELAY</text>
<text class="nm" x="2638" y="1081" fill="#36361f">RISER</text>
<text class="nm" x="2628.5" y="1155" fill="#201545">BASS MAIN</text>
<text class="nm" x="2638" y="1229" fill="#201545">BASS</text>
<text class="nm" x="2638" y="1303" fill="#201545">WOMP</text>
<text class="nm" x="2630" y="1377" fill="#1f190e">VOX</text>
<text class="nm" x="2628.5" y="1451.5" fill="#222">FX</text>
<text class="nm" x="2635" y="1488" fill="#1f3f30">Master</text>

<!-- Scrollbar -->
<rect x="2830" y="180" width="14" height="1035" rx="7" fill="#6a6a6a"/>

<!-- Bottom right round buttons -->
<circle cx="2837" cy="1353" r="13" fill="#0e0e0e"/><text class="sm" x="2837" y="1358">I·O</text>
<circle cx="2837" cy="1391" r="13" fill="#4e4e4e"/><text class="sm" x="2837" y="1396" style="fill:#6a6a6a">R</text>
<circle cx="2837" cy="1429" r="13" fill="#0e0e0e"/><text class="sm" x="2837" y="1434">M</text>
<circle cx="2837" cy="1467" r="13" fill="#0e0e0e"/><text class="sm" x="2837" y="1472">D</text>
</svg>
</body>
</html>
